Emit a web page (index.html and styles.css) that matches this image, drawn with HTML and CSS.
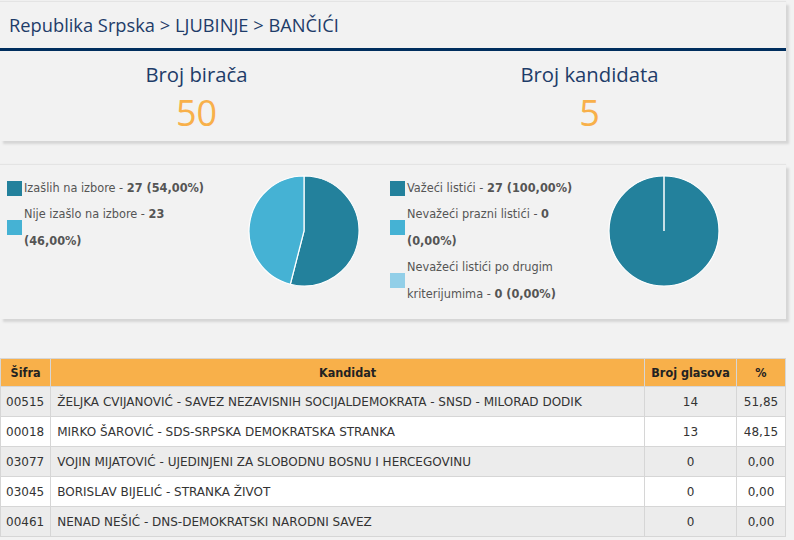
FILE: index.html
```html
<!DOCTYPE html>
<html lang="sr">
<head>
<meta charset="utf-8">
<title>BANČIĆI</title>
<link rel="stylesheet" href="styles.css">
</head>
<body>
<div class="panel top-panel">
  <div class="crumbs">Republika Srpska &gt; LJUBINJE &gt; BANČIĆI</div>
  <div class="stats">
    <div class="stat">
      <div class="stat-label">Broj birača</div>
      <div class="stat-value">50</div>
    </div>
    <div class="stat">
      <div class="stat-label">Broj kandidata</div>
      <div class="stat-value">5</div>
    </div>
  </div>
</div>

<div class="panel chart-panel">
  <div class="chart-group group-1">
    <ul class="legend">
      <li><span class="sw c1"></span><span class="lt">Izašlih na izbore - <b>27 (54,00%)</b></span></li>
      <li><span class="sw c2"></span><span class="lt">Nije izašlo na izbore - <b>23 (46,00%)</b></span></li>
    </ul>
    <svg class="pie" width="112" height="112" viewBox="0 0 112 112">
      <path d="M56,56 L56,1 A55,55 0 1 1 42.32,109.27 Z" fill="#23819c" stroke="#fff" stroke-width="1.2"/>
      <path d="M56,56 L42.32,109.27 A55,55 0 0 1 56,1 Z" fill="#45b2d4" stroke="#fff" stroke-width="1.2"/>
    </svg>
  </div>
  <div class="chart-group group-2">
    <ul class="legend">
      <li><span class="sw c1"></span><span class="lt">Važeći listići - <b>27 (100,00%)</b></span></li>
      <li><span class="sw c2"></span><span class="lt">Nevažeći prazni listići - <b>0 (0,00%)</b></span></li>
      <li><span class="sw c3"></span><span class="lt">Nevažeći listići po drugim kriterijumima - <b>0 (0,00%)</b></span></li>
    </ul>
    <svg class="pie" width="112" height="112" viewBox="0 0 112 112">
      <circle cx="56" cy="56" r="55" fill="#23819c" stroke="#fff" stroke-width="1.2"/>
      <line x1="56" y1="1" x2="56" y2="56" stroke="#fff" stroke-width="1.5"/>
    </svg>
  </div>
</div>

<table class="results">
  <thead>
    <tr>
      <th class="col-code">Šifra</th>
      <th>Kandidat</th>
      <th class="col-votes">Broj glasova</th>
      <th class="col-pct">%</th>
    </tr>
  </thead>
  <tbody>
    <tr><td class="code">00515</td><td>ŽELJKA CVIJANOVIĆ - SAVEZ NEZAVISNIH SOCIJALDEMOKRATA - SNSD - MILORAD DODIK</td><td class="num">14</td><td class="num">51,85</td></tr>
    <tr><td class="code">00018</td><td>MIRKO ŠAROVIĆ - SDS-SRPSKA DEMOKRATSKA STRANKA</td><td class="num">13</td><td class="num">48,15</td></tr>
    <tr><td class="code">03077</td><td>VOJIN MIJATOVIĆ - UJEDINJENI ZA SLOBODNU BOSNU I HERCEGOVINU</td><td class="num">0</td><td class="num">0,00</td></tr>
    <tr><td class="code">03045</td><td>BORISLAV BIJELIĆ - STRANKA ŽIVOT</td><td class="num">0</td><td class="num">0,00</td></tr>
    <tr><td class="code">00461</td><td>NENAD NEŠIĆ - DNS-DEMOKRATSKI NARODNI SAVEZ</td><td class="num">0</td><td class="num">0,00</td></tr>
  </tbody>
</table>
</body>
</html>
```

FILE: styles.css
```css
* { box-sizing: border-box; }

body {
  margin: 0;
  background: #f2f2f2;
  font-family: "DejaVu Sans Condensed", "DejaVu Sans", sans-serif;
  color: #333;
}

.panel {
  width: 786px;
  background: #f2f2f2;
  box-shadow: 3px 3px 2px #d6d6d6, 0 -1px 1px #e4e4e4;
}

.top-panel {
  margin-top: 2px;
  height: 139px;
}

.crumbs {
  height: 49px;
  border-bottom: 3px solid #002e5e;
  padding: 10px 0 0 9px;
  font-family: "Open Sans", "Noto Sans", sans-serif;
  font-size: 18.3px;
  color: #1e3c69;
}

.stats {
  display: grid;
  grid-template-columns: 1fr 1fr;
}

.stat {
  text-align: center;
  padding-top: 9px;
}

.stat-label {
  font-family: "Open Sans", "Noto Sans", sans-serif;
  font-size: 20.3px;
  color: #1e3c69;
  line-height: 28px;
}

.stat-value {
  font-family: "Open Sans", "Noto Sans", sans-serif;
  font-size: 36px;
  color: #f8b04a;
  line-height: 48px;
  margin-top: 1px;
}

.chart-panel {
  margin-top: 24px;
  height: 154px;
  display: flex;
  padding: 10px 0 0 7px;
}

.chart-group {
  display: flex;
  align-items: flex-start;
}

.group-1 { width: 383px; }
.group-1 .legend { width: 241px; }
.group-2 .legend { width: 218px; }

.legend {
  list-style: none;
  margin: 0;
  padding: 0;
  font-size: 12.6px;
  color: #555;
}

.legend li {
  display: flex;
  align-items: center;
}

.legend b {
  font-weight: bold;
  color: #555;
}

.sw {
  flex: none;
  width: 15px;
  height: 15px;
  margin-right: 2px;
}

.lt {
  width: 186px;
  line-height: 26.4px;
}

.c1 { background: #23819c; }
.c2 { background: #45b2d4; }
.c3 { background: #92cfe8; }

.pie {
  flex: none;
  display: block;
}

.results {
  margin-top: 39px;
  width: 786px;
  border-collapse: collapse;
  font-family: "DejaVu Sans", sans-serif;
  font-size: 12px;
  color: #333;
}

.results th,
.results td {
  border: 1px solid #d6d6d6;
  padding: 0 6px;
}

.results th {
  background: #f8b04a;
  color: #222;
  font-family: "DejaVu Sans Condensed", "DejaVu Sans", sans-serif;
  font-weight: bold;
  font-size: 12.5px;
  white-space: nowrap;
  height: 28px;
  text-align: center;
}

.results td {
  height: 30px;
}

.results tbody tr:nth-child(odd) td { background: #ececec; }
.results tbody tr:nth-child(even) td { background: #ffffff; }

.results .col-code { width: 50px; }
.results .col-votes { width: 92px; }
.results .col-pct { width: 49px; }

.results td.code { padding-left: 5px; }
.results td.num { text-align: center; }
```
